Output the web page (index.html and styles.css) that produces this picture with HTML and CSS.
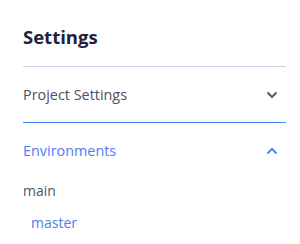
FILE: index.html
```html
<!DOCTYPE html>
<html lang="en">
<head>
    <meta charset="UTF-8">
    <title>Settings</title>
    <link rel="stylesheet" href="styles.css">
</head>
<body>
    <div class="settings">
        <h1>Settings</h1>

        <div class="section">
            <div class="section-header">
                <span>Project Settings</span>
                <svg class="chevron" width="12" height="8" viewBox="0 0 12 8"><path d="M1.5 1.5 L6 6 L10.5 1.5" fill="none" stroke="currentColor" stroke-width="2"/></svg>
            </div>
        </div>

        <div class="section open">
            <div class="section-header">
                <span>Environments</span>
                <svg class="chevron" width="12" height="8" viewBox="0 0 12 8"><path d="M1.5 6.5 L6 2 L10.5 6.5" fill="none" stroke="currentColor" stroke-width="2"/></svg>
            </div>
            <div class="env-list">
                <div class="env-group">main</div>
                <div class="env-item">master</div>
            </div>
        </div>
    </div>
</body>
</html>
```

FILE: styles.css
```css
body {
    margin: 0;
    font-family: "Open Sans", "Noto Sans", sans-serif;
    background: #fff;
}
.settings {
    padding: 0 14px 0 23px;
}
h1 {
    margin: 0;
    padding: 24px 0 17px;
    font-size: 18.5px;
    font-weight: 700;
    color: #23213a;
    border-bottom: 1px solid #c9d3e6;
}
.section-header {
    display: flex;
    align-items: center;
    justify-content: space-between;
    height: 55px;
    font-size: 14.4px;
    color: #505060;
    border-bottom: 1px solid #4287f5;
}
.section-header .chevron {
    margin-right: 8px;
    color: #5c5a6a;
}
.open .section-header {
    border-bottom: none;
    color: #4f7cf7;
}
.open .section-header .chevron {
    color: #4f86f7;
}
.env-list {
    font-size: 14px;
}
.env-group {
    color: #555560;
    padding-top: 3px;
}
.env-item {
    color: #4a80f0;
    padding: 13px 0 0 8px;
}
```
